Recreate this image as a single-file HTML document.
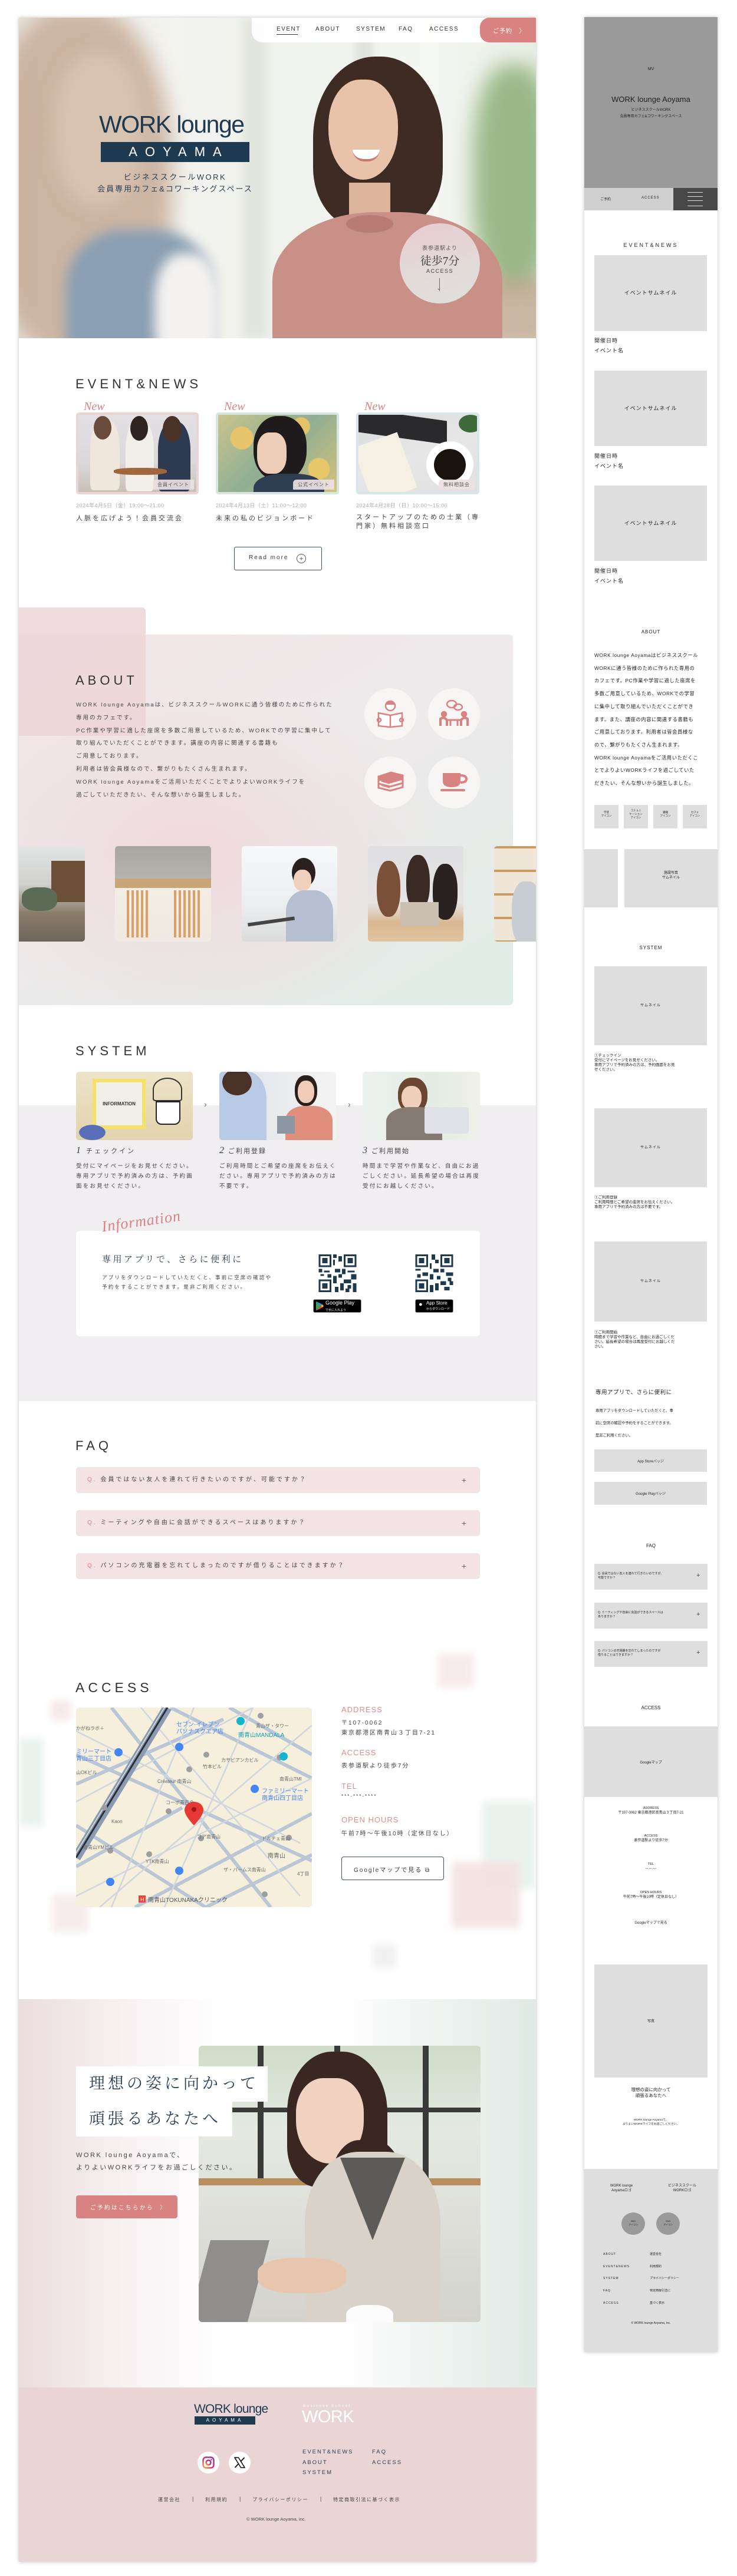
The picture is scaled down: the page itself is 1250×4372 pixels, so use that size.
<!DOCTYPE html>
<html lang="ja"><head><meta charset="utf-8">
<style>
*{margin:0;padding:0;box-sizing:border-box}
html,body{width:1250px;height:4372px;background:#fff;overflow:hidden}
body{position:relative;font-family:"Liberation Sans","Noto Sans CJK JP",sans-serif;color:#333}
.a{position:absolute}
.t{position:absolute;white-space:nowrap}
.h2{font-size:22px;letter-spacing:6px;color:#333;line-height:26px}
.pg{position:absolute;left:32px;top:30px;width:877px;height:4318px;background:#fff;box-shadow:0 0 6px rgba(0,0,0,.25)}
.sp{position:absolute;left:991px;top:29px;width:226px;height:3963px;background:#fff;box-shadow:0 0 6px rgba(0,0,0,.25)}
.gb{position:absolute;background:#dedede}
.m{font-size:9px;color:#222;letter-spacing:1px;line-height:11px}
.blur{position:absolute;filter:blur(6px)}
.new{position:absolute;font-family:"Liberation Serif",serif;font-style:italic;color:#d98282;font-size:20px;line-height:20px}
.lab{position:absolute;right:4px;bottom:4px;background:rgba(236,225,226,.92);font-size:8px;color:#555;padding:3px 8px;letter-spacing:1px;border-top-left-radius:6px}
.ic{position:absolute;width:88px;height:88px;border-radius:50%;background:#f7f4f4}
.faq{position:absolute;left:129px;width:685px;height:44px;background:#f3e3e4;border-radius:5px;font-size:10px;letter-spacing:3px;color:#444;line-height:44px;padding-left:19px}
.faq b{color:#d98282;font-weight:normal}
.faq i{position:absolute;right:20px;font-style:normal;font-size:14px;color:#666}
.sd{font-size:9.5px;letter-spacing:2.2px;color:#444;line-height:17px}
.lbl{font-size:13px;color:#e08c8c;letter-spacing:1px}
.inf{font-size:10px;color:#444;letter-spacing:2px}
</style></head><body>

<!-- ================= DESKTOP PAGE ================= -->
<div class="pg"></div>

<!-- HERO -->
<div class="a" style="left:32px;top:30px;width:877px;height:544px;overflow:hidden;background:linear-gradient(90deg,#e9e6e0 0%,#f3f3ef 30%,#eef1ec 55%,#f4f6f2 80%,#e8eee4 100%)">
  <div class="a" style="left:380px;top:0;width:40px;height:544px;background:#e2e4de;filter:blur(8px)"></div>
  <div class="a" style="left:570px;top:0;width:30px;height:300px;background:#dfe2dd;filter:blur(6px)"></div>
  <div class="a" style="left:-60px;top:-20px;width:320px;height:600px;border-radius:45%;background:#c6ab96;filter:blur(18px);opacity:.85"></div>
  <div class="a" style="left:60px;top:60px;width:150px;height:260px;border-radius:45%;background:#d8c2b0;filter:blur(14px)"></div>
  <div class="a" style="left:80px;top:360px;width:250px;height:240px;border-radius:40% 40% 0 0;background:#8a9fb3;filter:blur(10px)"></div>
  <div class="a" style="left:230px;top:400px;width:110px;height:200px;border-radius:40%;background:#f4f2f0;filter:blur(10px)"></div>
  <div class="a" style="left:770px;top:80px;width:140px;height:380px;border-radius:40%;background:#86aa70;filter:blur(18px);opacity:.8"></div>
  <div class="a" style="left:700px;top:440px;width:220px;height:120px;background:#b59277;filter:blur(14px);opacity:.6"></div>
  <!-- woman right -->
  <div class="a" style="left:499px;top:66px;width:220px;height:290px;border-radius:48% 48% 35% 35%;background:#3e2c24"></div>
  <div class="a" style="left:525px;top:105px;width:118px;height:170px;border-radius:45% 45% 50% 50%;background:#e9c2aa"></div>
  <div class="a" style="left:560px;top:280px;width:70px;height:60px;background:#dcb39b"></div>
  <div class="a" style="left:430px;top:330px;width:390px;height:260px;border-radius:45% 45% 0 0;background:#c99088"></div>
  <div class="a" style="left:555px;top:335px;width:80px;height:30px;border-radius:50%;background:#b87c75"></div>
  <div class="a" style="left:566px;top:224px;width:46px;height:20px;border-radius:0 0 25px 25px;background:#fff;border-bottom:4px solid #c47a73"></div>
</div>
<!-- nav -->
<div class="a" style="left:427px;top:30px;width:400px;height:42px;background:rgba(255,255,255,.92);border-bottom-left-radius:18px"></div>
<div class="t" style="left:469px;top:44px;font-size:10px;letter-spacing:1.5px;color:#333">EVENT</div>
<div class="a" style="left:469px;top:58px;width:36px;height:1px;background:#333"></div>
<div class="t" style="left:535px;top:44px;font-size:10px;letter-spacing:1.5px;color:#333">ABOUT</div>
<div class="t" style="left:604px;top:44px;font-size:10px;letter-spacing:1.5px;color:#333">SYSTEM</div>
<div class="t" style="left:676px;top:44px;font-size:10px;letter-spacing:1.5px;color:#333">FAQ</div>
<div class="t" style="left:728px;top:44px;font-size:10px;letter-spacing:1.5px;color:#333">ACCESS</div>
<div class="a" style="left:814px;top:30px;width:95px;height:42px;background:#d98282;border-radius:0 0 0 16px;border-top-left-radius:16px"></div>
<div class="t" style="left:836px;top:44px;font-size:10px;letter-spacing:1px;color:#fff">ご予約 &nbsp;&nbsp;〉</div>
<!-- logo -->
<div class="t" style="left:168px;top:188px;font-size:41px;letter-spacing:-1.5px;color:#1e3a50;line-height:46px">WORK lounge</div>
<div class="a" style="left:171px;top:241px;width:252px;height:34px;background:#1e3a50;color:#fff;font-size:22px;letter-spacing:13px;text-align:center;line-height:34px;padding-left:13px">AOYAMA</div>
<div class="t" style="left:171px;top:290px;width:252px;text-align:center;font-size:13px;letter-spacing:2.5px;color:#2a3e50">ビジネススクールWORK</div>
<div class="t" style="left:165px;top:310px;width:264px;text-align:center;font-size:13px;letter-spacing:2px;color:#2a3e50">会員専用カフェ&amp;コワーキングスペース</div>
<!-- badge -->
<div class="a" style="left:678px;top:379px;width:136px;height:136px;border-radius:50%;background:linear-gradient(170deg,#e8cfd3 0%,#e5dcdc 50%,#dfe4e0 100%);opacity:.95"></div>
<div class="t" style="left:678px;top:414px;width:136px;text-align:center;font-size:9px;letter-spacing:1px;color:#555">表参道駅より</div>
<div class="t" style="left:678px;top:428px;width:136px;text-align:center;font-size:19px;color:#333;font-family:'Liberation Serif','Noto Serif CJK SC',serif">徒歩7分</div>
<div class="t" style="left:678px;top:455px;width:136px;text-align:center;font-size:9px;letter-spacing:1.5px;color:#444">ACCESS</div>
<div class="a" style="left:745px;top:472px;width:1px;height:22px;background:#666"></div>
<div class="t" style="left:740px;top:484px;font-size:10px;color:#666">⌄</div>

<!-- EVENT & NEWS -->
<div class="t h2" style="left:128px;top:639px">EVENT&amp;NEWS</div>
<div class="new" style="left:142px;top:680px">New</div>
<div class="new" style="left:380px;top:680px">New</div>
<div class="new" style="left:618px;top:680px">New</div>
<div class="a" style="left:129px;top:700px;width:208px;height:139px;border:4px solid #ecd3d4;border-radius:5px;overflow:hidden;background:linear-gradient(180deg,#e2e0e2 0%,#dcd9dc 60%,#c9c1b6 100%)">
  <div class="a" style="left:20px;top:8px;width:50px;height:120px;border-radius:40% 40% 10% 10%;background:#efe7dc"></div>
  <div class="a" style="left:26px;top:2px;width:30px;height:40px;border-radius:50%;background:#6a4a3a"></div>
  <div class="a" style="left:80px;top:10px;width:48px;height:120px;border-radius:40% 40% 10% 10%;background:#f2efe9"></div>
  <div class="a" style="left:88px;top:2px;width:30px;height:42px;border-radius:50%;background:#2f2420"></div>
  <div class="a" style="left:135px;top:12px;width:55px;height:118px;border-radius:40% 40% 10% 10%;background:#2d3a52"></div>
  <div class="a" style="left:143px;top:2px;width:32px;height:44px;border-radius:50%;background:#4a3228"></div>
  <div class="a" style="left:60px;top:90px;width:90px;height:12px;border-radius:40%;background:#a0673c"></div>
  <div class="lab">会員イベント</div>
</div>
<div class="a" style="left:366px;top:700px;width:209px;height:139px;border:4px solid #d5e6e0;border-radius:5px;overflow:hidden;background:radial-gradient(circle at 20% 30%,#e7c56c 0 10%,transparent 11%),radial-gradient(circle at 70% 15%,#e4c366 0 8%,transparent 9%),radial-gradient(circle at 85% 70%,#e8c76b 0 9%,transparent 10%),linear-gradient(135deg,#c9c48c,#8fae94 50%,#d2c27a)">
  <div class="a" style="left:60px;top:2px;width:90px;height:110px;border-radius:45%;background:#1f1b1c"></div>
  <div class="a" style="left:66px;top:30px;width:50px;height:70px;border-radius:40%;background:#edcdb8"></div>
  <div class="a" style="left:60px;top:100px;width:120px;height:60px;border-radius:40% 40% 0 0;background:#2e3d52"></div>
  <div class="lab">公式イベント</div>
</div>
<div class="a" style="left:604px;top:700px;width:209px;height:139px;border:4px solid #d7e6e8;border-radius:5px;overflow:hidden;background:linear-gradient(160deg,#d8d9da 0%,#e6e7e6 50%,#dfe0df 100%)">
  <div class="a" style="left:0;top:0;width:150px;height:40px;background:#2a2a2c;transform:skewY(8deg)"></div>
  <div class="a" style="left:5px;top:40px;width:80px;height:100px;background:#f4f0e4;transform:rotate(-20deg)"></div>
  <div class="a" style="left:115px;top:45px;width:80px;height:80px;border-radius:50%;background:#fff"></div>
  <div class="a" style="left:128px;top:58px;width:54px;height:54px;border-radius:50%;background:#1a120e"></div>
  <div class="a" style="left:170px;top:0;width:40px;height:30px;border-radius:50%;background:#3f6b3a"></div>
  <div class="lab">無料相談会</div>
</div>
<div class="t" style="left:129px;top:851px;font-size:9px;color:#aaa;letter-spacing:.5px">2024年4月5日（金）19:00〜21:00</div>
<div class="t" style="left:366px;top:851px;font-size:9px;color:#aaa;letter-spacing:.5px">2024年4月13日（土）11:00〜12:00</div>
<div class="t" style="left:604px;top:851px;font-size:9px;color:#aaa;letter-spacing:.5px">2024年4月28日（日）10:00〜15:00</div>
<div class="t" style="left:129px;top:871px;font-size:11px;color:#444;letter-spacing:3px">人脈を広げよう！会員交流会</div>
<div class="t" style="left:366px;top:871px;font-size:11px;color:#444;letter-spacing:3px">未来の私のビジョンボード</div>
<div class="t" style="left:604px;top:871px;font-size:11px;color:#444;letter-spacing:3px;line-height:15px">スタートアップのための士業（専<br>門家）無料相談窓口</div>
<div class="a" style="left:397px;top:928px;width:149px;height:40px;border:1px solid #3b4e62;border-radius:3px"></div>
<div class="t" style="left:422px;top:941px;font-size:10px;letter-spacing:2px;color:#333">Read more</div>
<div class="a" style="left:503px;top:940px;width:16px;height:16px;border:1px solid #555;border-radius:50%;font-size:12px;line-height:14px;text-align:center;color:#555">+</div>

<!-- ABOUT -->
<div class="a" style="left:32px;top:1077px;width:838px;height:629px;border-radius:0 6px 6px 0;background:radial-gradient(ellipse at 35% 60%,#efd9dc 0%,rgba(240,226,228,0) 55%),linear-gradient(150deg,#f1e4e6 0%,#eeeaeb 45%,#dfece6 100%)"></div>
<div class="a" style="left:32px;top:1031px;width:215px;height:218px;border-radius:0 6px 0 0;background:#ecd5d7;opacity:.85"></div>
<div class="t h2" style="left:128px;top:1142px">ABOUT</div>
<div class="t" style="left:129px;top:1186px;font-size:9.5px;letter-spacing:2px;line-height:21.8px;color:#444">WORK lounge Aoyamaは、ビジネススクールWORKに通う皆様のために作られた<br>専用のカフェです。<br>PC作業や学習に適した座席を多数ご用意しているため、WORKでの学習に集中して<br>取り組んでいただくことができます。講座の内容に関連する書籍も<br>ご用意しております。<br>利用者は皆会員様なので、繋がりもたくさん生まれます。<br>WORK lounge Aoyamaをご活用いただくことでよりよいWORKライフを<br>過ごしていただきたい、そんな想いから誕生しました。</div>
<div class="ic" style="left:618px;top:1168px"></div>
<div class="ic" style="left:726px;top:1168px"></div>
<div class="ic" style="left:618px;top:1284px"></div>
<div class="ic" style="left:726px;top:1284px"></div>
<svg class="a" style="left:638px;top:1186px" width="48" height="50" viewBox="0 0 48 50" fill="none" stroke="#d98282" stroke-width="2.5"><circle cx="24" cy="12" r="8" fill="#fff"/><path d="M16 10 Q24 2 32 10" fill="#d98282"/><path d="M4 24 L24 28 L44 24 L44 46 L24 48 L4 46 Z" fill="#fff"/><path d="M24 28 V48"/><circle cx="5" cy="36" r="3"/><circle cx="43" cy="36" r="3"/></svg>
<svg class="a" style="left:744px;top:1186px" width="52" height="50" viewBox="0 0 52 50" fill="none" stroke="#d98282" stroke-width="2.5"><ellipse cx="22" cy="9" rx="8" ry="6"/><ellipse cx="33" cy="14" rx="7" ry="5"/><circle cx="9" cy="26" r="4" fill="#d98282"/><circle cx="43" cy="26" r="4" fill="#d98282"/><path d="M3 46 V34 Q9 30 14 36 L14 46 M49 46 V34 Q43 30 38 36 L38 46" stroke-width="4"/><path d="M14 36 H38 M20 36 V46 M32 36 V46" stroke-width="3"/></svg>
<svg class="a" style="left:639px;top:1308px" width="46" height="40" viewBox="0 0 46 40" fill="none" stroke="#d98282" stroke-width="3"><path d="M3 10 L24 3 L44 8 L44 14 L23 20 L3 15 Z" fill="#d98282"/><path d="M3 15 V22 L23 27 L44 21 V14"/><path d="M3 22 V29 L23 34 L44 28 V21"/><path d="M8 18 L22 22 M8 25 L22 29" stroke-width="1.5"/></svg>
<svg class="a" style="left:745px;top:1310px" width="50" height="36" viewBox="0 0 50 36"><path d="M6 2 H36 V16 Q36 26 21 26 Q6 26 6 16 Z" fill="#d98282"/><path d="M36 6 Q46 6 46 12 Q46 18 36 18" fill="none" stroke="#d98282" stroke-width="4"/><rect x="2" y="29" width="42" height="4" rx="2" fill="#d98282"/></svg>
<!-- about photos -->
<div class="a" style="left:32px;top:1436px;width:112px;height:162px;border-radius:0 5px 5px 0;overflow:hidden;background:linear-gradient(180deg,#e3e5e6 0%,#cfd0cc 40%,#8b7d6c 70%,#6f655b 100%)"><div class="a" style="left:55px;top:25px;width:57px;height:70px;background:#6b4f36"></div><div class="a" style="left:5px;top:70px;width:60px;height:40px;background:#5b6b56;border-radius:40%"></div></div>
<div class="a" style="left:195px;top:1436px;width:163px;height:162px;border-radius:5px;overflow:hidden;background:linear-gradient(180deg,#a9a6a2 0%,#b6b3ae 35%,#f3ede5 45%,#efe9e1 100%)"><div class="a" style="left:0;top:55px;width:163px;height:16px;background:#c9a57a"></div><div class="a" style="left:20px;top:75px;width:40px;height:80px;background:repeating-linear-gradient(90deg,#d9a264 0 4px,transparent 4px 8px)"></div><div class="a" style="left:100px;top:75px;width:45px;height:80px;background:repeating-linear-gradient(90deg,#d9a264 0 4px,transparent 4px 8px)"></div></div>
<div class="a" style="left:410px;top:1436px;width:162px;height:162px;border-radius:5px;overflow:hidden;background:linear-gradient(180deg,#f7f8fa 0%,#eceef1 60%,#dcdcdc 100%)"><div class="a" style="left:85px;top:20px;width:40px;height:50px;border-radius:50%;background:#2b2020"></div><div class="a" style="left:88px;top:40px;width:30px;height:36px;border-radius:45%;background:#efd0bd"></div><div class="a" style="left:75px;top:75px;width:80px;height:90px;border-radius:40% 40% 0 0;background:#b6bfcf"></div><div class="a" style="left:10px;top:125px;width:80px;height:6px;background:#444;transform:rotate(-8deg)"></div></div>
<div class="a" style="left:624px;top:1436px;width:162px;height:162px;border-radius:5px;overflow:hidden;background:linear-gradient(180deg,#dfdfe2 0%,#e6e3e3 60%,#d9b891 80%,#e0c3a0 100%)"><div class="a" style="left:15px;top:25px;width:40px;height:95px;border-radius:45%;background:#7a5038"></div><div class="a" style="left:65px;top:15px;width:40px;height:95px;border-radius:45%;background:#3a2a24"></div><div class="a" style="left:110px;top:30px;width:42px;height:95px;border-radius:45%;background:#2a2220"></div><div class="a" style="left:55px;top:95px;width:65px;height:40px;background:#cbbfb2"></div></div>
<div class="a" style="left:838px;top:1436px;width:71px;height:162px;border-radius:5px 0 0 5px;overflow:hidden;background:repeating-linear-gradient(180deg,#c99c66 0 4px,#efe6d8 4px 40px)"><div class="a" style="left:30px;top:60px;width:50px;height:110px;border-radius:40%;background:#c8cdd3"></div></div>

<!-- SYSTEM -->
<div class="a" style="left:32px;top:1876px;width:877px;height:502px;background:#f0eef1"></div>
<div class="t h2" style="left:128px;top:1771px">SYSTEM</div>
<div class="a" style="left:129px;top:1819px;width:198px;height:116px;border-radius:5px;overflow:hidden;background:linear-gradient(180deg,#ede3c8,#e2d3ad)"><div class="a" style="left:28px;top:12px;width:90px;height:85px;background:#f5e06a"></div><div class="a" style="left:34px;top:18px;width:78px;height:73px;background:#f2efe8;font-size:8px;text-align:center;line-height:73px;color:#333;font-weight:bold">INFORMATION</div><div class="a" style="left:5px;top:90px;width:45px;height:26px;border-radius:50%;background:#5a6fb8"></div><div class="a" style="left:135px;top:50px;width:42px;height:40px;background:#fff;border:2px solid #222;border-radius:0 0 10px 10px"></div><div class="a" style="left:130px;top:10px;width:50px;height:40px;border:2px solid #333;border-radius:50% 50% 10% 10%"></div></div>
<div class="a" style="left:372px;top:1819px;width:198px;height:116px;border-radius:5px;overflow:hidden;background:linear-gradient(90deg,#dde2ea,#f4f3f2)"><div class="a" style="left:0;top:0;width:80px;height:116px;background:#b9cbe4;border-radius:0 40% 0 0"></div><div class="a" style="left:5px;top:-5px;width:50px;height:45px;border-radius:50%;background:#4a3228"></div><div class="a" style="left:128px;top:6px;width:38px;height:52px;border-radius:45%;background:#2b1f1c"></div><div class="a" style="left:133px;top:15px;width:28px;height:38px;border-radius:45%;background:#f0ccb8"></div><div class="a" style="left:112px;top:58px;width:80px;height:60px;border-radius:40% 40% 0 0;background:#e08f7e"></div><div class="a" style="left:98px;top:75px;width:30px;height:30px;background:#8d96a3"></div></div>
<div class="a" style="left:615px;top:1819px;width:199px;height:116px;border-radius:5px;overflow:hidden;background:linear-gradient(90deg,#edf1ef,#e2ece2 60%,#f0f0ea)"><div class="a" style="left:60px;top:10px;width:50px;height:60px;border-radius:45%;background:#6b4630"></div><div class="a" style="left:66px;top:24px;width:34px;height:40px;border-radius:45%;background:#efcfb9"></div><div class="a" style="left:40px;top:60px;width:95px;height:60px;border-radius:40% 40% 0 0;background:#857b73"></div><div class="a" style="left:105px;top:60px;width:75px;height:45px;background:#dfe3e8;border-radius:4px"></div></div>
<div class="t" style="left:346px;top:1866px;font-size:14px;color:#666">›</div>
<div class="t" style="left:590px;top:1866px;font-size:14px;color:#666">›</div>
<div class="t" style="left:129px;top:1944px;font-size:11px;letter-spacing:3px;color:#444"><span style="font-family:'Liberation Serif',serif;font-style:italic;font-size:16px;color:#2a3e55">1</span> チェックイン</div>
<div class="t" style="left:372px;top:1944px;font-size:11px;letter-spacing:2px;color:#444"><span style="font-family:'Liberation Serif',serif;font-style:italic;font-size:16px;color:#2a3e55">2</span> ご利用登録</div>
<div class="t" style="left:615px;top:1944px;font-size:11px;letter-spacing:2px;color:#444"><span style="font-family:'Liberation Serif',serif;font-style:italic;font-size:16px;color:#2a3e55">3</span> ご利用開始</div>
<div class="t sd" style="left:129px;top:1971px">受付にマイページをお見せください。<br>専用アプリで予約済みの方は、予約画<br>面をお見せください。</div>
<div class="t sd" style="left:372px;top:1971px">ご利用時間とご希望の座席をお伝えく<br>ださい。専用アプリで予約済みの方は<br>不要です。</div>
<div class="t sd" style="left:615px;top:1971px">時間まで学習や作業など、自由にお過<br>ごしください。延長希望の場合は再度<br>受付にお越しください。</div>
<!-- information card -->
<div class="a" style="left:129px;top:2089px;width:685px;height:179px;background:#fff;border-radius:6px"></div>
<div class="t" style="left:172px;top:2058px;font-family:'Liberation Serif',serif;font-style:italic;font-size:26px;color:#d98282;transform:rotate(-8deg);letter-spacing:1px">Information</div>
<div class="t" style="left:173px;top:2126px;font-size:15px;letter-spacing:3.5px;color:#2a3e55;font-family:'Liberation Serif','Noto Serif CJK SC',serif">専用アプリで、さらに便利に</div>
<div class="t" style="left:173px;top:2160px;font-size:8.5px;letter-spacing:2.2px;line-height:16px;color:#444">アプリをダウンロードしていただくと、事前に空席の確認や<br>予約をすることができます。是非ご利用ください。</div>
<svg class="a" style="left:540px;top:2129px" width="65" height="64" viewBox="0 0 21 21" shape-rendering="crispEdges"><g fill="#1e3a50"><path d="M0 0h7v7H0zM14 0h7v7h-7zM0 14h7v7H0z"/></g><g fill="#fff"><path d="M1 1h5v5H1zM15 1h5v5h-5zM1 15h5v5H1z"/></g><g fill="#1e3a50"><path d="M2 2h3v3H2zM16 2h3v3h-3zM2 16h3v3H2zM8 0h2v2H8zM11 1h2v3h-2zM8 3h1v3H8zM9 8h3v2H9zM0 8h2v2H0zM3 9h3v1H3zM13 8h2v3h-2zM16 9h4v1h-4zM18 11h3v3h-3zM8 12h2v4H8zM11 11h2v2h-2zM14 14h4v2h-4zM12 16h2v4h-2zM9 18h2v3H9zM16 17h2v2h-2zM19 16h2v5h-2zM15 19h2v2h-2zM5 11h2v2H5zM1 11h2v1H1z"/></g></svg>
<svg class="a" style="left:704px;top:2129px" width="65" height="64" viewBox="0 0 21 21" shape-rendering="crispEdges"><g fill="#1e3a50"><path d="M0 0h7v7H0zM14 0h7v7h-7zM0 14h7v7H0z"/></g><g fill="#fff"><path d="M1 1h5v5H1zM15 1h5v5h-5zM1 15h5v5H1z"/></g><g fill="#1e3a50"><path d="M2 2h3v3H2zM16 2h3v3h-3zM2 16h3v3H2zM9 0h2v3H9zM11 3h2v2h-2zM8 5h1v3H8zM10 8h3v2h-3zM0 8h3v1H0zM4 10h3v2H4zM14 8h2v2h-2zM17 10h4v2h-4zM18 13h2v2h-2zM8 11h2v3H8zM12 12h2v2h-2zM14 15h3v2h-3zM11 16h2v4h-2zM8 17h2v4H8zM16 18h3v2h-3zM19 15h2v2h-2zM1 11h2v2H1z"/></g></svg>
<div class="a" style="left:531px;top:2205px;width:82px;height:23px;background:#000;border-radius:3px;border:1px solid #999"></div>
<svg class="a" style="left:536px;top:2209px" width="13" height="15" viewBox="0 0 13 15"><path d="M0 0 L8 7.5 L0 15Z" fill="#34a853"/><path d="M0 0 L8 7.5 L11 5 L1 0Z" fill="#4285f4"/><path d="M0 15 L8 7.5 L11 10 L1 15Z" fill="#ea4335"/><path d="M8 7.5 L11 5 L13 7.5 L11 10Z" fill="#fbbc04"/></svg>
<div class="t" style="left:552px;top:2206px;font-size:9px;color:#fff;line-height:11px">Google Play<br><span style="font-size:5px">で手に入れよう</span></div>
<div class="a" style="left:704px;top:2205px;width:65px;height:23px;background:#000;border-radius:3px;border:1px solid #999"></div>
<div class="t" style="left:709px;top:2207px;font-size:13px;color:#fff"></div>
<div class="t" style="left:710px;top:2208px;font-size:11px;color:#fff">●</div>
<div class="t" style="left:723px;top:2207px;font-size:8px;color:#fff;line-height:9px">App Store<br><span style="font-size:5px">からダウンロード</span></div>

<!-- FAQ -->
<div class="t h2" style="left:128px;top:2441px">FAQ</div>
<div class="faq" style="top:2490px"><b>Q.</b> 会員ではない友人を連れて行きたいのですが、可能ですか？<i>+</i></div>
<div class="faq" style="top:2563px"><b>Q.</b> ミーティングや自由に会話ができるスペースはありますか？<i>+</i></div>
<div class="faq" style="top:2636px"><b>Q.</b> パソコンの充電器を忘れてしまったのですが借りることはできますか？<i>+</i></div>

<!-- ACCESS -->
<div class="blur" style="left:742px;top:2806px;width:62px;height:58px;background:#f5e6e6;opacity:.8"></div>
<div class="blur" style="left:86px;top:2886px;width:34px;height:34px;background:#f3e3e3;opacity:.8"></div>
<div class="blur" style="left:32px;top:2950px;width:42px;height:150px;background:#e5efea;opacity:.8"></div>
<div class="blur" style="left:818px;top:3056px;width:91px;height:150px;background:#e5efea;opacity:.8"></div>
<div class="blur" style="left:766px;top:3160px;width:116px;height:112px;background:#f3e1e1;opacity:.9"></div>
<div class="blur" style="left:88px;top:3215px;width:62px;height:65px;background:#f5e8e8;opacity:.8"></div>
<div class="blur" style="left:632px;top:3300px;width:40px;height:40px;background:#ececec;opacity:.8"></div>
<div class="t h2" style="left:128px;top:2851px;font-size:23px">ACCESS</div>
<div class="a" style="left:129px;top:2898px;width:400px;height:339px;border-radius:6px;overflow:hidden;background:#f5ecd8">
<svg width="400" height="339" viewBox="0 0 400 339">
<rect width="400" height="339" fill="#f6efdc"/>
<g stroke="#b9c6d6" stroke-width="6" fill="none">
<path d="M0 80 L400 260"/><path d="M60 0 L330 339"/><path d="M160 0 L400 120"/><path d="M0 200 L220 339"/><path d="M0 130 L250 20"/><path d="M100 339 L400 180"/><path d="M260 0 L400 80"/><path d="M0 270 L180 170"/><path d="M220 339 L400 250"/>
</g>
<g stroke="#cfd6df" stroke-width="2.5" fill="none">
<path d="M0 40 L380 230"/><path d="M110 0 L380 320"/><path d="M200 0 L60 339"/><path d="M300 0 L150 339"/><path d="M0 320 L400 120"/><path d="M0 160 L300 0"/><path d="M40 339 L400 30"/>
</g>
<path d="M155 0 L0 255" stroke="#8a9ab0" stroke-width="16"/>
<path d="M155 0 L0 255" stroke="#2c2f38" stroke-width="3"/>
<path d="M150 0 L-5 255" stroke="#fff" stroke-width="1"/>
<g fill="#9e9e9e"><circle cx="221" cy="80" r="5"/><circle cx="313" cy="14" r="5"/><circle cx="345" cy="85" r="5"/><circle cx="192" cy="105" r="5"/><circle cx="157" cy="176" r="5"/><circle cx="212" cy="222" r="5"/><circle cx="48" cy="170" r="5"/><circle cx="58" cy="243" r="5"/><circle cx="124" cy="249" r="5"/><circle cx="361" cy="221" r="5"/><circle cx="320" cy="317" r="5"/></g>
<g fill="#4285f4"><circle cx="175" cy="67" r="7"/><circle cx="72" cy="76" r="7"/><circle cx="303" cy="138" r="7"/><circle cx="175" cy="277" r="7"/><circle cx="58" cy="296" r="7"/></g>
<g fill="#12b5cb"><circle cx="279" cy="23" r="7"/><circle cx="352" cy="83" r="7"/></g>
<g font-size="10" fill="#4285f4" font-family="Liberation Sans,Noto Sans CJK JP,sans-serif"><text x="170" y="32">セブン-イレブン</text><text x="170" y="44">パソナスクエア店</text><text x="0" y="78">ミリーマート</text><text x="0" y="90">青山三丁目店</text><text x="315" y="145">ファミリーマート</text><text x="315" y="157">南青山四丁目店</text></g>
<g font-size="10" fill="#12a3b5" font-family="Liberation Sans,Noto Sans CJK JP,sans-serif"><text x="275" y="50">南青山MANDALA</text></g>
<g font-size="8" fill="#666" font-family="Liberation Sans,Noto Sans CJK JP,sans-serif"><text x="305" y="34">青山ザ・タワー</text><text x="246" y="92">カサビアンカビル</text><text x="215" y="103">竹本ビル</text><text x="138" y="128">Créateur 南青山</text><text x="152" y="164">コーポ青百合</text><text x="345" y="124">南青山TMI</text><text x="60" y="196">Kaon</text><text x="12" y="240">南青山YMビル</text><text x="118" y="264">YTK南青山</text><text x="205" y="222">コア南青山</text><text x="315" y="225">ドルチェ青山</text><text x="250" y="278">ザ・パームス南青山</text><text x="375" y="285">4丁目</text><text x="0" y="113">山OKビル</text><text x="0" y="38">かがねラボ＋</text><text x="325" y="255" font-size="10">南青山</text></g>
<rect x="106" y="319" width="12" height="12" fill="#ea4335"/><text x="109" y="329" font-size="9" fill="#fff">H</text>
<text x="122" y="330" font-size="10" fill="#555" font-family="Liberation Sans,Noto Sans CJK JP,sans-serif">南青山TOKUNAKAクリニック</text>
<path d="M200 160 C190 160 184 167 184 174 C184 184 200 200 200 200 C200 200 216 184 216 174 C216 167 210 160 200 160Z" fill="#e53935"/><circle cx="200" cy="173" r="4" fill="#a31515"/>
</svg></div>
<div class="t lbl" style="left:579px;top:2894px">ADDRESS</div>
<div class="t inf" style="left:579px;top:2915px">〒107-0062</div>
<div class="t inf" style="left:579px;top:2932px">東京都港区南青山３丁目7-21</div>
<div class="t lbl" style="left:579px;top:2967px">ACCESS</div>
<div class="t inf" style="left:579px;top:2988px">表参道駅より徒歩7分</div>
<div class="t lbl" style="left:579px;top:3024px">TEL</div>
<div class="t inf" style="left:579px;top:3044px;font-size:8px">***-***-****</div>
<div class="t lbl" style="left:579px;top:3081px">OPEN HOURS</div>
<div class="t inf" style="left:579px;top:3103px">午前7時〜午後10時（定休日なし）</div>
<div class="a" style="left:579px;top:3151px;width:174px;height:40px;border:1px solid #3b4e62;border-radius:4px"></div>
<div class="t" style="left:600px;top:3165px;font-size:10px;letter-spacing:2px;color:#333">Googleマップで見る ⧉</div>

<!-- CTA -->
<div class="a" style="left:32px;top:3393px;width:877px;height:659px;background:linear-gradient(90deg,#ecdcdd 0%,#f7f1f2 20%,#fff 40%,#fff 62%,#f3f6f4 75%,#dfeae5 100%)"></div>
<div class="a" style="left:337px;top:3472px;width:478px;height:469px;border-radius:6px;overflow:hidden;background:linear-gradient(180deg,#cfdcc8 0%,#e4e9e2 30%,#dfe0db 60%,#d3d2cd 100%)">
  <div class="a" style="left:100px;top:0;width:10px;height:230px;background:#3a3a3a"></div>
  <div class="a" style="left:230px;top:0;width:10px;height:230px;background:#3a3a3a"></div>
  <div class="a" style="left:380px;top:0;width:10px;height:230px;background:#3a3a3a"></div>
  <div class="a" style="left:0;top:105px;width:478px;height:8px;background:#3a3a3a"></div>
  <div class="a" style="left:0;top:225px;width:478px;height:12px;background:#b98d5c"></div>
  <div class="a" style="left:150px;top:10px;width:170px;height:230px;border-radius:45% 45% 30% 30%;background:#3b2722"></div>
  <div class="a" style="left:165px;top:55px;width:115px;height:145px;border-radius:40% 40% 50% 50%;background:#efd2c0"></div>
  <div class="a" style="left:225px;top:160px;width:120px;height:170px;border-radius:40%;background:#3b2722"></div>
  <div class="a" style="left:180px;top:180px;width:230px;height:300px;border-radius:40% 40% 0 0;background:#d8d2c8"></div>
  <div class="a" style="left:240px;top:190px;width:110px;height:140px;background:#5d5a5a;clip-path:polygon(0 0,100% 0,50% 100%)"></div>
  <div class="a" style="left:0;top:330px;width:100px;height:150px;background:#8f8e8c;transform:skewX(-15deg)"></div>
  <div class="a" style="left:100px;top:360px;width:150px;height:60px;border-radius:40%;background:#e8c6ad"></div>
  <div class="a" style="left:250px;top:440px;width:80px;height:40px;border-radius:40% 40% 0 0;background:#fbfbfb"></div>
</div>
<div class="a" style="left:129px;top:3507px;width:325px;height:60px;background:#fff"></div>
<div class="a" style="left:129px;top:3566px;width:265px;height:60px;background:#fff"></div>
<div class="t" style="left:151px;top:3514px;font-size:27px;letter-spacing:5px;color:#2a3e55;font-family:'Liberation Serif','Noto Serif CJK SC',serif">理想の姿に向かって</div>
<div class="t" style="left:151px;top:3574px;font-size:27px;letter-spacing:5px;color:#2a3e55;font-family:'Liberation Serif','Noto Serif CJK SC',serif">頑張るあなたへ</div>
<div class="t" style="left:129px;top:3648px;font-size:11px;letter-spacing:2.5px;color:#444;line-height:21px">WORK lounge Aoyamaで、<br>よりよいWORKライフをお過ごしください。</div>
<div class="a" style="left:129px;top:3726px;width:172px;height:39px;background:#d98282;border-radius:4px"></div>
<div class="t" style="left:153px;top:3739px;font-size:9.5px;letter-spacing:2.5px;color:#fff">ご予約はこちらから &nbsp;〉</div>

<!-- FOOTER -->
<div class="a" style="left:32px;top:4052px;width:877px;height:296px;background:#e9d5d5"></div>
<div class="t" style="left:329px;top:4077px;font-size:21px;letter-spacing:-.8px;color:#1e3a50;line-height:24px">WORK lounge</div>
<div class="a" style="left:330px;top:4101px;width:103px;height:14px;background:#1e3a50;color:#fff;font-size:8px;letter-spacing:5px;text-align:center;line-height:14px">AOYAMA</div>
<div class="t" style="left:514px;top:4080px;font-size:6.5px;letter-spacing:2.2px;color:#fff">Business School</div>
<div class="t" style="left:512px;top:4086px;font-size:29px;color:#fff;letter-spacing:-.5px;line-height:32px">WORK</div>
<div class="a" style="left:335px;top:4161px;width:37px;height:37px;border-radius:50%;background:#fff"></div>
<svg class="a" style="left:343px;top:4169px" width="21" height="21" viewBox="0 0 21 21"><defs><linearGradient id="ig" x1="0" y1="1" x2="1" y2="0"><stop offset="0" stop-color="#fdb034"/><stop offset=".4" stop-color="#e1306c"/><stop offset="1" stop-color="#833ab4"/></linearGradient></defs><rect x="1.5" y="1.5" width="18" height="18" rx="5" fill="none" stroke="url(#ig)" stroke-width="2.5"/><circle cx="10.5" cy="10.5" r="4" fill="none" stroke="url(#ig)" stroke-width="2.5"/><circle cx="15.5" cy="5.5" r="1.3" fill="#c13584"/></svg>
<div class="a" style="left:388px;top:4161px;width:37px;height:37px;border-radius:50%;background:#fff"></div>
<svg class="a" style="left:397px;top:4170px" width="19" height="19" viewBox="0 0 19 19"><path d="M1 1 L7.5 1 L18 18 L11.5 18 Z" fill="none" stroke="#111" stroke-width="1.6"/><path d="M17.5 1 L11 8 M1.5 18 L8 11" stroke="#111" stroke-width="1.8"/></svg>
<div class="t" style="left:513px;top:4153px;font-size:9.5px;letter-spacing:2px;color:#2a3e55;line-height:17.5px">EVENT&amp;NEWS<br>ABOUT<br>SYSTEM</div>
<div class="t" style="left:631px;top:4153px;font-size:9.5px;letter-spacing:2px;color:#2a3e55;line-height:17.5px">FAQ<br>ACCESS</div>
<div class="t" style="left:268px;top:4237px;font-size:8px;letter-spacing:1.5px;color:#444;word-spacing:0">運営会社</div>
<div class="t" style="left:326px;top:4236px;font-size:9px;color:#444">|</div>
<div class="t" style="left:348px;top:4237px;font-size:8px;letter-spacing:1.5px;color:#444">利用規約</div>
<div class="t" style="left:406px;top:4236px;font-size:9px;color:#444">|</div>
<div class="t" style="left:428px;top:4237px;font-size:8px;letter-spacing:1.5px;color:#444">プライバシーポリシー</div>
<div class="t" style="left:543px;top:4236px;font-size:9px;color:#444">|</div>
<div class="t" style="left:565px;top:4237px;font-size:8px;letter-spacing:1.5px;color:#444">特定商取引法に基づく表示</div>
<div class="t" style="left:418px;top:4271px;font-size:7.5px;color:#444">© WORK lounge Aoyama, inc.</div>

<!-- ================= SP WIREFRAME ================= -->
<div class="sp"></div>
<div class="gb" style="left:991px;top:29px;width:226px;height:290px;background:#9a9a9a"></div>
<div class="t" style="left:991px;top:114px;width:226px;text-align:center;font-size:7px;color:#222">MV</div>
<div class="t" style="left:991px;top:161px;width:226px;text-align:center;font-size:13px;color:#222">WORK lounge Aoyama</div>
<div class="t" style="left:991px;top:181px;width:226px;text-align:center;font-size:6px;color:#222">ビジネススクールWORK</div>
<div class="t" style="left:991px;top:192px;width:226px;text-align:center;font-size:6px;color:#222">会員専用カフェ&amp;コワーキングスペース</div>
<div class="gb" style="left:991px;top:319px;width:151px;height:38px;background:#cfcfcf"></div>
<div class="gb" style="left:1142px;top:319px;width:75px;height:38px;background:#484848"></div>
<div class="t" style="left:1018px;top:333px;font-size:6px;color:#222">ご予約</div>
<div class="t" style="left:1088px;top:333px;font-size:6px;color:#222;letter-spacing:1px">ACCESS</div>
<div class="a" style="left:1166px;top:326px;width:26px;height:24px;border-top:1px solid #ddd;border-bottom:1px solid #ddd"></div>
<div class="a" style="left:1166px;top:333px;width:26px;height:8px;border-top:1px solid #ddd;border-bottom:1px solid #ddd"></div>
<div class="t" style="left:991px;top:411px;width:226px;text-align:center;font-size:9px;letter-spacing:3px;color:#222">EVENT&amp;NEWS</div>
<div class="gb" style="left:1008px;top:433px;width:191px;height:129px"></div><div class="t m" style="left:1008px;top:492px;width:191px;text-align:center">イベントサムネイル</div>
<div class="t m" style="left:1008px;top:570px;line-height:17px">開催日時<br>イベント名</div>
<div class="gb" style="left:1008px;top:629px;width:191px;height:128px"></div><div class="t m" style="left:1008px;top:688px;width:191px;text-align:center">イベントサムネイル</div>
<div class="t m" style="left:1008px;top:766px;line-height:17px">開催日時<br>イベント名</div>
<div class="gb" style="left:1008px;top:824px;width:191px;height:128px"></div><div class="t m" style="left:1008px;top:883px;width:191px;text-align:center">イベントサムネイル</div>
<div class="t m" style="left:1008px;top:961px;line-height:17px">開催日時<br>イベント名</div>
<div class="t" style="left:991px;top:1068px;width:226px;text-align:center;font-size:8px;letter-spacing:1px;color:#222">ABOUT</div>
<div class="t" style="left:1008px;top:1102px;font-size:8.3px;color:#222;line-height:21.7px;letter-spacing:.6px">WORK lounge Aoyamaはビジネススクール<br>WORKに通う皆様のために作られた専用の<br>カフェです。PC作業や学習に適した座席を<br>多数ご用意しているため、WORKでの学習<br>に集中して取り組んでいただくことができ<br>ます。また、講座の内容に関連する書籍も<br>ご用意しております。利用者は皆会員様な<br>ので、繋がりもたくさん生まれます。<br>WORK lounge Aoyamaをご活用いただくこ<br>とでよりよいWORKライフを過ごしていた<br>だきたい、そんな想いから誕生しました。</div>
<div class="gb" style="left:1008px;top:1366px;width:41px;height:40px"></div><div class="t" style="left:1008px;top:1376px;width:41px;text-align:center;font-size:4.5px;line-height:6px;color:#222">学習<br>アイコン</div>
<div class="gb" style="left:1058px;top:1366px;width:41px;height:40px"></div><div class="t" style="left:1058px;top:1373px;width:41px;text-align:center;font-size:4.5px;line-height:6px;color:#222">コミュニ<br>ケーション<br>アイコン</div>
<div class="gb" style="left:1108px;top:1366px;width:41px;height:40px"></div><div class="t" style="left:1108px;top:1376px;width:41px;text-align:center;font-size:4.5px;line-height:6px;color:#222">書籍<br>アイコン</div>
<div class="gb" style="left:1158px;top:1366px;width:41px;height:40px"></div><div class="t" style="left:1158px;top:1376px;width:41px;text-align:center;font-size:4.5px;line-height:6px;color:#222">カフェ<br>アイコン</div>
<div class="gb" style="left:991px;top:1441px;width:57px;height:99px"></div>
<div class="gb" style="left:1059px;top:1441px;width:158px;height:99px"></div>
<div class="t" style="left:1059px;top:1478px;width:158px;text-align:center;font-size:6px;line-height:8px;color:#222">施設写真<br>サムネイル</div>
<div class="t" style="left:991px;top:1604px;width:226px;text-align:center;font-size:8px;letter-spacing:1px;color:#222">SYSTEM</div>
<div class="gb" style="left:1008px;top:1640px;width:191px;height:134px"></div><div class="t m" style="left:1008px;top:1702px;width:191px;text-align:center;font-size:6px">サムネイル</div>
<div class="t" style="left:1008px;top:1788px;font-size:6.5px;line-height:8px;color:#222">①チェックイン<br>受付にマイページをお見せください。<br>専用アプリで予約済みの方は、予約画面をお見<br>せください。</div>
<div class="gb" style="left:1008px;top:1881px;width:191px;height:134px"></div><div class="t m" style="left:1008px;top:1943px;width:191px;text-align:center;font-size:6px">サムネイル</div>
<div class="t" style="left:1008px;top:2029px;font-size:6.5px;line-height:8px;color:#222">①ご利用登録<br>ご利用時間とご希望の座席をお伝えください。<br>専用アプリで予約済みの方は不要です。</div>
<div class="gb" style="left:1008px;top:2107px;width:191px;height:136px"></div><div class="t m" style="left:1008px;top:2170px;width:191px;text-align:center;font-size:6px">サムネイル</div>
<div class="t" style="left:1008px;top:2258px;font-size:6.5px;line-height:8px;color:#222">①ご利用開始<br>時間まで学習や作業など、自由にお過ごしくだ<br>さい。延長希望の場合は再度受付にお越しくだ<br>さい。</div>
<div class="t" style="left:1010px;top:2355px;font-size:9.5px;color:#222;letter-spacing:.5px">専用アプリで、さらに便利に</div>
<div class="t" style="left:1010px;top:2384px;font-size:6.3px;line-height:21px;color:#222">専用アプリをダウンロードしていただくと、事<br>前に空席の確認や予約をすることができます。<br>是非ご利用ください。</div>
<div class="gb" style="left:1008px;top:2460px;width:191px;height:38px"></div><div class="t" style="left:1008px;top:2475px;width:191px;text-align:center;font-size:6px;color:#222">App Storeバッジ</div>
<div class="gb" style="left:1008px;top:2515px;width:191px;height:39px"></div><div class="t" style="left:1008px;top:2530px;width:191px;text-align:center;font-size:6px;color:#222">Google Playバッジ</div>
<div class="t" style="left:991px;top:2619px;width:226px;text-align:center;font-size:8px;color:#222">FAQ</div>
<div class="gb" style="left:1008px;top:2654px;width:192px;height:44px"></div><div class="t" style="left:1014px;top:2668px;font-size:5px;line-height:7px;color:#222">Q. 会員ではない友人を連れて行きたいのですが、<br>可能ですか？</div><div class="t" style="left:1181px;top:2668px;font-size:11px;color:#444">+</div>
<div class="gb" style="left:1008px;top:2720px;width:192px;height:44px"></div><div class="t" style="left:1014px;top:2734px;font-size:5px;line-height:7px;color:#222">Q. ミーティングや自由に会話ができるスペースは<br>ありますか？</div><div class="t" style="left:1181px;top:2734px;font-size:11px;color:#444">+</div>
<div class="gb" style="left:1008px;top:2785px;width:192px;height:44px"></div><div class="t" style="left:1014px;top:2799px;font-size:5px;line-height:7px;color:#222">Q. パソコンの充電器を忘れてしまったのですが<br>借りることはできますか？</div><div class="t" style="left:1181px;top:2799px;font-size:11px;color:#444">+</div>
<div class="t" style="left:991px;top:2894px;width:226px;text-align:center;font-size:8px;color:#222">ACCESS</div>
<div class="gb" style="left:991px;top:2930px;width:226px;height:120px"></div><div class="t" style="left:991px;top:2986px;width:226px;text-align:center;font-size:6px;color:#222">Googleマップ</div>
<div class="t" style="left:991px;top:3065px;width:226px;text-align:center;font-size:5.5px;line-height:8px;color:#222">ADDRESS<br><span style="font-size:6px">〒107-0062 東京都港区南青山３丁目7-21</span></div>
<div class="t" style="left:991px;top:3112px;width:226px;text-align:center;font-size:5.5px;line-height:8px;color:#222">ACCESS<br><span style="font-size:6px">表参道駅より徒歩7分</span></div>
<div class="t" style="left:991px;top:3160px;width:226px;text-align:center;font-size:5.5px;line-height:8px;color:#222">TEL<br><span style="font-size:4px">***-***-****</span></div>
<div class="t" style="left:991px;top:3208px;width:226px;text-align:center;font-size:5.5px;line-height:8px;color:#222">OPEN HOURS<br><span style="font-size:6px">午前7時〜午後10時（定休日なし）</span></div>
<div class="t" style="left:991px;top:3258px;width:226px;text-align:center;font-size:6px;color:#222">Googleマップで見る</div>
<div class="gb" style="left:1008px;top:3334px;width:192px;height:192px"></div><div class="t" style="left:1008px;top:3425px;width:192px;text-align:center;font-size:6px;color:#222">写真</div>
<div class="t" style="left:991px;top:3542px;width:226px;text-align:center;font-size:7.5px;line-height:10px;color:#222">理想の姿に向かって<br>頑張るあなたへ</div>
<div class="t" style="left:991px;top:3595px;width:226px;text-align:center;font-size:4.8px;line-height:7px;color:#222">WORK lounge Aoyamaで、<br>よりよいWORKライフをお過ごしください。</div>
<div class="gb" style="left:991px;top:3681px;width:226px;height:311px"></div>
<div class="t" style="left:1014px;top:3706px;width:80px;text-align:center;font-size:6px;line-height:8px;color:#222">WORK lounge<br>Aoyamaロゴ</div>
<div class="t" style="left:1117px;top:3706px;width:80px;text-align:center;font-size:6px;line-height:8px;color:#222">ビジネススクール<br>WORKロゴ</div>
<div class="a" style="left:1054px;top:3755px;width:40px;height:38px;border-radius:50%;background:#9a9a9a"></div><div class="t" style="left:1054px;top:3767px;width:40px;text-align:center;font-size:4px;line-height:6px;color:#222">SNS<br>アイコン</div>
<div class="a" style="left:1113px;top:3755px;width:40px;height:38px;border-radius:50%;background:#9a9a9a"></div><div class="t" style="left:1113px;top:3767px;width:40px;text-align:center;font-size:4px;line-height:6px;color:#222">SNS<br>アイコン</div>
<div class="t" style="left:1023px;top:3816px;font-size:5px;letter-spacing:1px;line-height:20.7px;color:#222">ABOUT<br>EVENT&amp;NEWS<br>SYSTEM<br>FAQ<br>ACCESS</div>
<div class="t" style="left:1102px;top:3816px;font-size:5px;line-height:20.7px;color:#222">運営会社<br>利用規約<br>プライバシーポリシー<br>特定商取引法に<br>基づく表示</div>
<div class="t" style="left:991px;top:3940px;width:226px;text-align:center;font-size:5px;color:#222">© WORK lounge Aoyama, inc.</div>
</body></html>
